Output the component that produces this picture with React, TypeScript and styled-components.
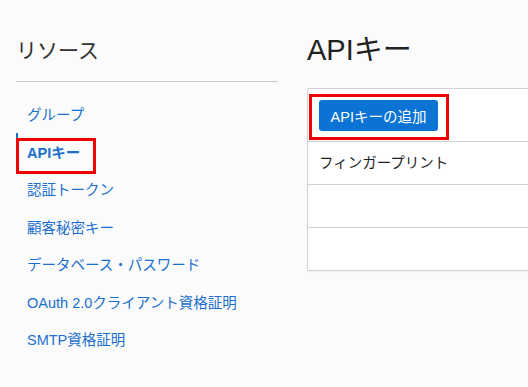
import React from 'react';
import styled, { createGlobalStyle } from 'styled-components';

const resources = [
  'グループ',
  'APIキー',
  '認証トークン',
  '顧客秘密キー',
  'データベース・パスワード',
  'OAuth 2.0クライアント資格証明',
  'SMTP資格証明',
];

const colors = {
  page: '#fbfbfb',
  text: '#2f2f2f',
  link: '#1a6fcf',
  primary: '#0a73d4',
  border: '#cfd1d4',
  mark: '#f00000',
};

const GlobalStyle = createGlobalStyle`
  html, body {
    margin: 0;
    padding: 0;
    overflow: hidden;
    background: ${colors.page};
  }
  body {
    font-family: "Liberation Sans", "Noto Sans CJK JP", sans-serif;
    color: ${colors.text};
  }
`;

const App: React.FC = () => {
  return (
    <>
      <GlobalStyle />
      <Page>
        <Sidebar>
          <SideTitle>リソース</SideTitle>
          <NavList>
            {resources.map((name) => (
              <NavItem key={name} $active={name === 'APIキー'}>
                {name}
                {name === 'APIキー' && <NavMark />}
              </NavItem>
            ))}
          </NavList>
        </Sidebar>
        <Main>
          <Heading>APIキー</Heading>
          <Panel>
            <Toolbar>
              <AddButton>
                APIキーの追加
                <ButtonMark />
              </AddButton>
            </Toolbar>
            <HeaderRow>フィンガープリント</HeaderRow>
            <Row />
            <Row />
          </Panel>
        </Main>
      </Page>
    </>
  );
};

const Page = styled.div`
  display: flex;
  width: 100%;
  height: 387px;
  padding-left: 16px;
  box-sizing: border-box;
  overflow: hidden;
`;

const Sidebar = styled.div`
  width: 262px;
  flex-shrink: 0;
`;

const SideTitle = styled.div`
  height: 82px;
  padding-top: 35px;
  box-sizing: border-box;
  font-family: "Noto Sans CJK JP", sans-serif;
  font-size: 21px;
  line-height: 28px;
  color: #333;
  border-bottom: 1px solid #c9cbce;
  margin-bottom: 13px;
`;

const NavList = styled.div`
  display: flex;
  flex-direction: column;
`;

const NavItem = styled.div<{ $active?: boolean }>`
  position: relative;
  height: 37.5px;
  display: flex;
  align-items: center;
  padding-left: 9px;
  border-left: 2px solid ${(p) => (p.$active ? colors.link : 'transparent')};
  font-size: 14.5px;
  font-weight: ${(p) => (p.$active ? 700 : 400)};
  color: ${colors.link};
  white-space: nowrap;
`;

const NavMark = styled.span`
  position: absolute;
  left: -2px;
  top: 5px;
  width: 80px;
  height: 36px;
  border: 3px solid ${colors.mark};
  box-sizing: border-box;
`;

const Main = styled.div`
  margin-left: 29px;
  flex: 1;
  min-width: 0;
`;

const Heading = styled.h1`
  margin: 0;
  padding-top: 30px;
  height: 88px;
  box-sizing: border-box;
  font-size: 29px;
  font-weight: 400;
  line-height: 40px;
  color: #222;
`;

const Panel = styled.div`
  background: #fff;
  border: 1px solid ${colors.border};
  border-right: none;
  border-radius: 2px 0 0 2px;
  box-shadow: 0 1px 1px rgba(0, 0, 0, 0.05);
`;

const Toolbar = styled.div`
  display: flex;
  align-items: center;
  height: 52px;
  padding-left: 11px;
  border-bottom: 1px solid ${colors.border};
`;

const AddButton = styled.button`
  position: relative;
  height: 31px;
  width: 119px;
  padding: 0;
  border: none;
  border-radius: 3px;
  background: ${colors.primary};
  color: #fff;
  font-family: "Liberation Sans", "Noto Sans CJK JP", sans-serif;
  font-size: 14.5px;
  cursor: pointer;
`;

const ButtonMark = styled.span`
  position: absolute;
  left: -10px;
  top: -6px;
  width: 140px;
  height: 46px;
  border: 3px solid ${colors.mark};
  box-sizing: border-box;
`;

const Row = styled.div`
  height: 42px;
  display: flex;
  align-items: center;
  padding-left: 11px;
  border-bottom: 1px solid ${colors.border};

  &:last-child {
    border-bottom: none;
  }
`;

const HeaderRow = styled(Row)`
  padding-bottom: 4px;
  box-sizing: border-box;
  height: 43px;
  font-size: 14.5px;
  color: #1e1e1e;
`;

export default App;
